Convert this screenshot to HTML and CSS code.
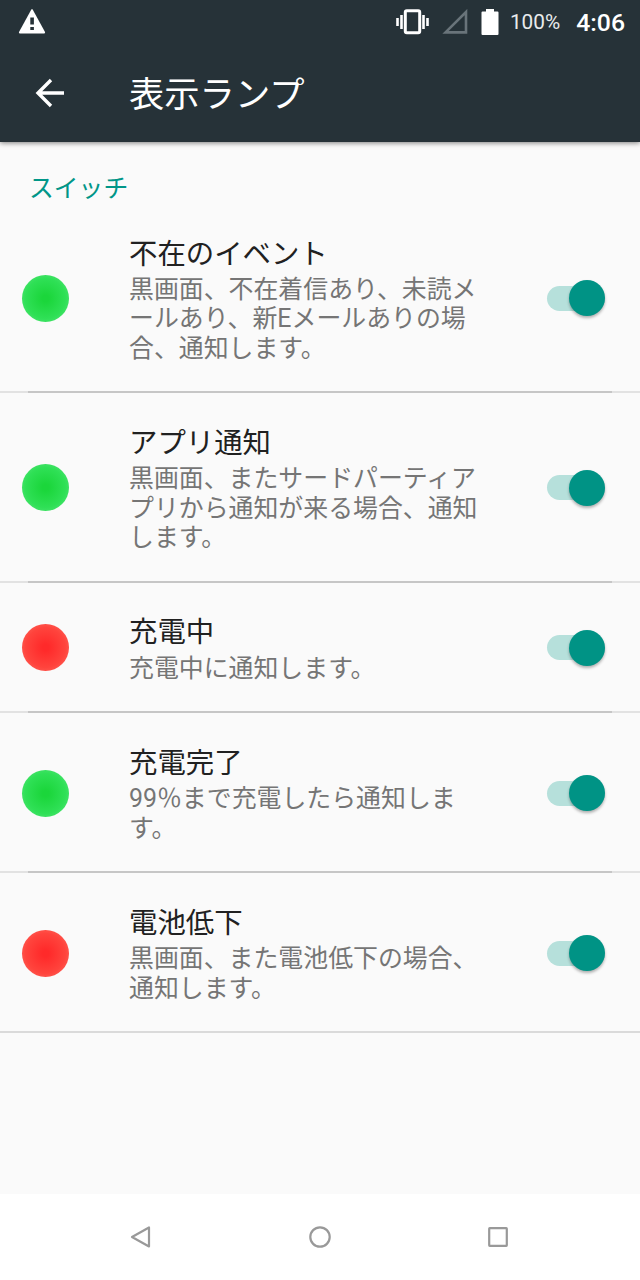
FILE: index.html
```
<!DOCTYPE html>
<html lang="ja">
<head>
    <meta charset="UTF-8">
    <meta name="viewport" content="width=device-width, initial-scale=1.0">
    <title>表示ランプ</title>
    <link rel="stylesheet" href="styles.css">
</head>
<body>
    <div class="header">
        <div class="status-bar">
            <svg class="warning" width="28" height="26" viewBox="0 0 28 26">
                <path d="M13.2 .7Q14 -.5 14.8 .7L27 23Q27.4 24.5 26 24.5H2Q.6 24.5 1 23Z" fill="#fff"/>
                <path d="M12.3 8.5h3.6v7h-3.6zM12.3 18.1h3.6v3h-3.6z" fill="#263238"/>
            </svg>
            <svg class="vibrate" width="33" height="26" viewBox="0 0 33 26">
                <rect x="9.3" y="1.8" width="14.4" height="22" rx="1.5" fill="none" stroke="#fff" stroke-width="3"/>
                <path d="M5.5 6v14M1.5 9v8M27.5 6v14M31.5 9v8" stroke="#fff" stroke-width="2.6"/>
            </svg>
            <svg class="signal" width="26" height="26" viewBox="0 0 26 26">
                <path d="M24 3v20.4H3.5z" fill="none" stroke="#69747a" stroke-width="2.6"/>
            </svg>
            <svg class="battery" width="18" height="26" viewBox="0 0 18 26">
                <path d="M5 0h8v2.5h3.5Q17.5 2.5 17.5 3.5v21.5q0 1-1 1h-15q-1 0-1-1v-21.5q0-1 1-1H5z" fill="#fff"/>
            </svg>
            <span class="percent">100%</span>
            <span class="clock">4:06</span>
        </div>
        <div class="toolbar">
            <svg class="back" width="30" height="30" viewBox="0 0 30 30">
                <path d="M29 15H3M16 2L3 15l13 13" fill="none" stroke="#fff" stroke-width="3.4"/>
            </svg>
            <h1>表示ランプ</h1>
        </div>
    </div>
    <div class="content">
        <h2>スイッチ</h2>
        <div class="row">
            <div class="lamp green"></div>
            <div class="text">
                <div class="title">不在のイベント</div>
                <div class="summary">黒画面、不在着信あり、未読メ<br>ールあり、新Eメールありの場<br>合、通知します。</div>
            </div>
            <div class="switch"><div class="thumb"></div></div>
        </div>
        <div class="row">
            <div class="lamp green"></div>
            <div class="text">
                <div class="title">アプリ通知</div>
                <div class="summary">黒画面、またサードパーティア<br>プリから通知が来る場合、通知<br>します。</div>
            </div>
            <div class="switch"><div class="thumb"></div></div>
        </div>
        <div class="row">
            <div class="lamp red"></div>
            <div class="text">
                <div class="title">充電中</div>
                <div class="summary">充電中に通知します。</div>
            </div>
            <div class="switch"><div class="thumb"></div></div>
        </div>
        <div class="row">
            <div class="lamp green"></div>
            <div class="text">
                <div class="title">充電完了</div>
                <div class="summary">99％まで充電したら通知しま<br>す。</div>
            </div>
            <div class="switch"><div class="thumb"></div></div>
        </div>
        <div class="row">
            <div class="lamp red"></div>
            <div class="text">
                <div class="title">電池低下</div>
                <div class="summary">黒画面、また電池低下の場合、<br>通知します。</div>
            </div>
            <div class="switch"><div class="thumb"></div></div>
        </div>
    </div>
    <div class="nav-bar">
        <svg width="24" height="24" viewBox="0 0 24 24">
            <path d="M19 2.5v19L2 12z"/>
        </svg>
        <svg width="24" height="24" viewBox="0 0 24 24">
            <circle cx="12" cy="12" r="9.7"/>
        </svg>
        <svg width="24" height="24" viewBox="0 0 24 24">
            <rect x="3.2" y="3.2" width="17.6" height="17.6" rx=".5"/>
        </svg>
    </div>
</body>
</html>
```

FILE: styles.css
```
* {
    box-sizing: border-box;
}
body {
    margin: 0;
    height: 1280px;
    display: flex;
    flex-direction: column;
    background: #fafafa;
    font-family: Roboto, "Noto Sans CJK JP", sans-serif;
    overflow: hidden;
}
h1, h2 {
    margin: 0;
    font-weight: normal;
}
.header {
    height: 142px;
    background: #263238;
    color: #fff;
    box-shadow: 0 1px 5px rgba(0, 0, 0, 0.5);
}
.status-bar {
    height: 43px;
    display: flex;
    align-items: center;
    padding: 0 15px 0 18px;
}
.vibrate {
    margin-left: auto;
}
.signal {
    margin-left: 13px;
}
.battery {
    margin-left: 13px;
}
.percent {
    margin-left: 11px;
    padding-top: 1px;
    font-size: 20.8px;
    color: #e9ebec;
}
.clock {
    margin-left: 16px;
    padding-top: 2px;
    font-size: 24.8px;
    font-weight: 500;
}
.toolbar {
    height: 99px;
    display: flex;
    align-items: center;
    padding-left: 35px;
}
h1 {
    margin-left: 64px;
    padding-top: 4px;
    font-size: 35.3px;
    line-height: 44px;
}
.content {
    flex: 1;
}
h2 {
    height: 62px;
    padding: 31px 0 0 29px;
    font-size: 24.8px;
    line-height: 31px;
    color: #009688;
}
.row {
    display: flex;
    align-items: center;
    padding: 30px 35px 28.5px 22px;
    border-bottom: 2px solid #e2e2e2;
    border-image: linear-gradient(to right, #e2e2e2 30px, #c6c6c6 30px, #c6c6c6 610px, #e2e2e2 610px) 2;
}
.row:last-child {
    border-image: none;
    border-color: #dadada;
}
.lamp {
    width: 47px;
    height: 47px;
    border-radius: 50%;
}
.green {
    background: radial-gradient(circle, #1bd63b 10%, #2fe056 60%, #3ce262 70%);
}
.red {
    background: radial-gradient(circle, #ff2a2a 10%, #ff443d 60%, #ff5048 70%);
}
.text {
    flex: 1;
    margin-left: 60px;
    padding-top: 3.5px;
    white-space: nowrap;
}
.title {
    font-size: 28.4px;
    line-height: 33.4px;
    color: #212121;
}
.summary {
    margin-top: 4px;
    font-size: 24.9px;
    line-height: 29.3px;
    color: #757575;
}
.switch {
    width: 58px;
    height: 25px;
    display: flex;
    align-items: center;
    justify-content: flex-end;
    border-radius: 13px;
    background: #b6e0db;
}
.thumb {
    width: 36px;
    height: 36px;
    flex: none;
    border-radius: 50%;
    background: #009385;
    box-shadow: 0 2px 3px rgba(0, 0, 0, 0.3);
}
.nav-bar {
    height: 86px;
    display: flex;
    justify-content: space-between;
    align-items: center;
    padding: 0 130px;
    background: #fff;
}
.nav-bar svg {
    fill: none;
    stroke: #999;
    stroke-width: 2.2;
    stroke-linejoin: round;
}
```
